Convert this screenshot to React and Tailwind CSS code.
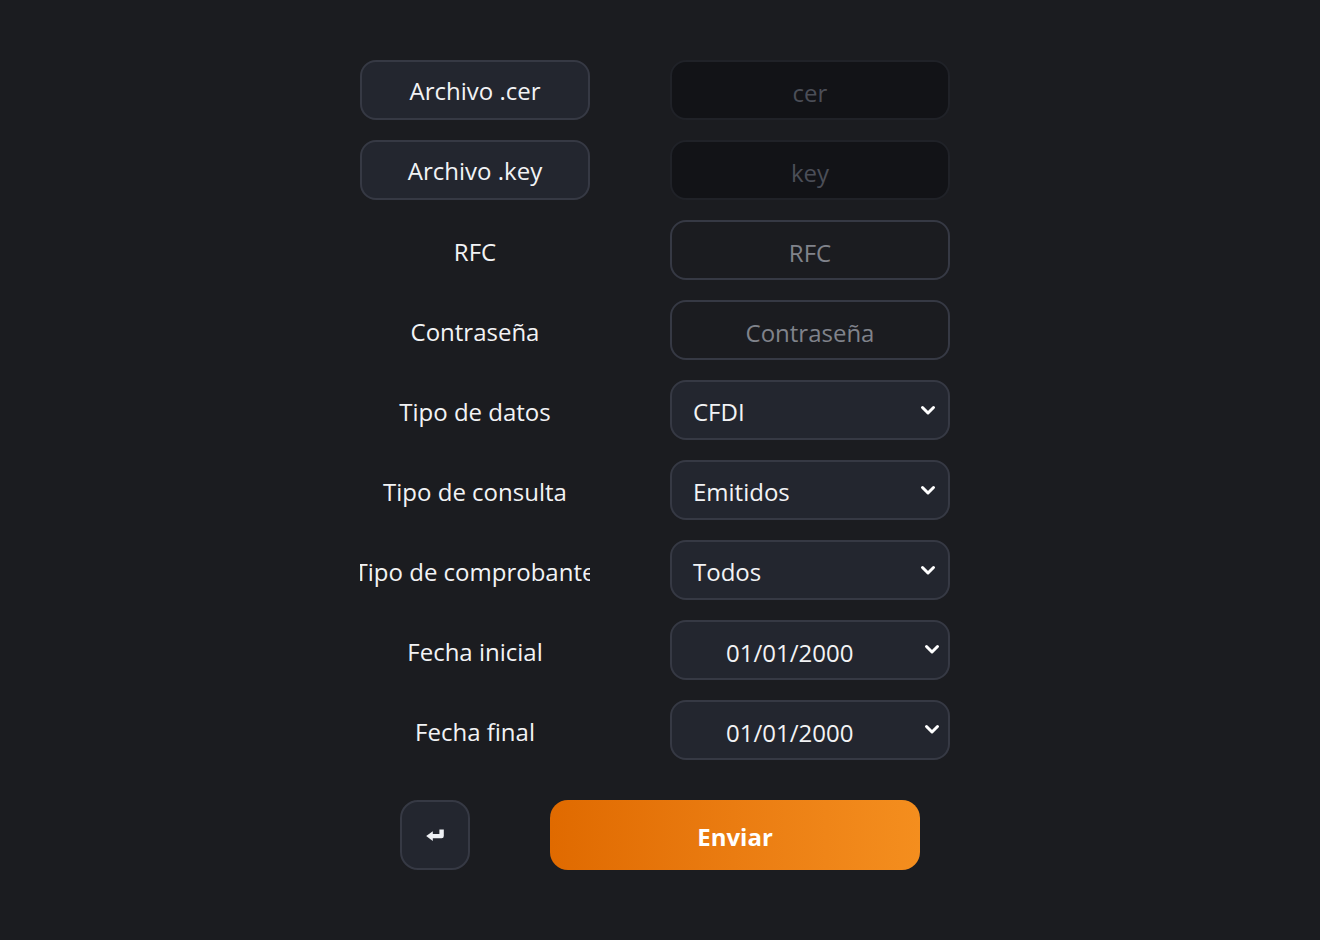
import React from "react";

function Chevron({ className = "" }) {
  return (
    <svg width="16" height="12" viewBox="0 0 16 12" className={className}>
      <path d="M2.5 3.5 L8 9 L13.5 3.5" fill="none" stroke="#ffffff" strokeWidth="3" strokeLinecap="round" strokeLinejoin="round" />
    </svg>
  );
}

function Row({ left, right }) {
  return (
    <div className="flex items-center gap-[80px]">
      <div className="w-[230px] h-[60px] flex items-center justify-center overflow-hidden">{left}</div>
      <div className="w-[280px] h-[60px]">{right}</div>
    </div>
  );
}

function Label({ children }) {
  return <span className="whitespace-nowrap pt-[4px] text-[24px] text-[#f2f3f5]">{children}</span>;
}

function FileBtn({ children }) {
  return (
    <div className="w-full h-full flex items-center justify-center pt-[2px] rounded-[16px] border-2 border-[#363944] bg-[#23262f] text-[24px] text-[#f2f3f5] whitespace-nowrap">
      {children}
    </div>
  );
}

function DarkInput({ placeholder }) {
  return (
    <div className="w-full h-full flex items-center justify-center pt-[5px] rounded-[16px] border-2 border-[#202228] bg-[#121317] text-[24px] text-[#4b4e57]">
      {placeholder}
    </div>
  );
}

function Input({ placeholder }) {
  return (
    <div className="w-full h-full flex items-center justify-center pt-[5px] rounded-[16px] border-2 border-[#363944] bg-[#1b1c20] text-[24px] text-[#80838b]">
      {placeholder}
    </div>
  );
}

function Select({ value }) {
  return (
    <div className="w-full h-full flex items-center justify-between pl-[21px] pr-[12px] rounded-[16px] border-2 border-[#363944] bg-[#23262f] text-[24px] text-[#f2f3f5]">
      <span className="pt-[4px]">{value}</span>
      <Chevron />
    </div>
  );
}

function DateSel({ value }) {
  return (
    <div className="w-full h-full flex items-center justify-between pl-[54px] pr-[8px] rounded-[16px] border-2 border-[#363944] bg-[#23262f] text-[24px] text-[#f2f3f5]">
      <span className="pt-[6px]">{value}</span>
      <Chevron className="mb-[2px]" />
    </div>
  );
}

export default function App() {
  return (
    <div
      className="w-[1320px] h-[940px] bg-[#1b1c20] flex justify-center pt-[60px] pr-[10px]"
      style={{ fontFamily: '"Open Sans", "Noto Sans", sans-serif' }}
    >
      <div className="flex flex-col gap-[20px]">
        <Row left={<FileBtn>Archivo .cer</FileBtn>} right={<DarkInput placeholder="cer" />} />
        <Row left={<FileBtn>Archivo .key</FileBtn>} right={<DarkInput placeholder="key" />} />
        <Row left={<Label>RFC</Label>} right={<Input placeholder="RFC" />} />
        <Row left={<Label>Contraseña</Label>} right={<Input placeholder="Contraseña" />} />
        <Row left={<Label>Tipo de datos</Label>} right={<Select value="CFDI" />} />
        <Row left={<Label>Tipo de consulta</Label>} right={<Select value="Emitidos" />} />
        <Row left={<Label>Tipo de comprobante</Label>} right={<Select value="Todos" />} />
        <Row left={<Label>Fecha inicial</Label>} right={<DateSel value="01/01/2000" />} />
        <Row left={<Label>Fecha final</Label>} right={<DateSel value="01/01/2000" />} />
        <div className="flex items-center mt-[20px] pl-[40px] gap-[80px]">
          <button className="w-[70px] h-[70px] flex items-center justify-center rounded-[18px] border-2 border-[#363944] bg-[#23262f]">
            <svg width="22" height="16" viewBox="0 0 20 14">
              <path d="M16 2 V8 H7" fill="none" stroke="#eef0f4" strokeWidth="4" strokeLinejoin="round" />
              <path d="M2 8 L8 3.5 L8 12.5 Z" fill="#eef0f4" />
            </svg>
          </button>
          <button className="w-[370px] h-[70px] flex items-center justify-center pt-[4px] rounded-[18px] bg-gradient-to-r from-[#e06a00] to-[#f48e1e] text-[24px] font-bold text-white">
            Enviar
          </button>
        </div>
      </div>
    </div>
  );
}
